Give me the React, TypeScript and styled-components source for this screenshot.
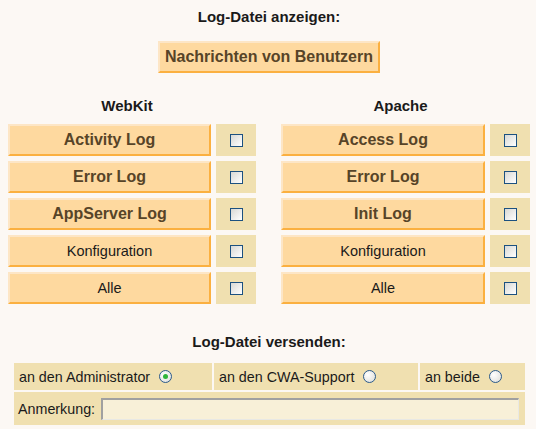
import * as React from "react";
import styled, { createGlobalStyle } from "styled-components";

const GlobalStyle = createGlobalStyle`
  html, body {
    margin: 0;
    padding: 0;
    background: #fcf8f4;
  }
  body {
    font-family: "Liberation Sans", Arial, sans-serif;
    color: #1a1a1a;
  }
`;

const Page = styled.div`
  width: 522px;
  padding: 8px 0 0 8px;
`;

const Heading = styled.div`
  text-align: center;
  font-weight: bold;
  font-size: 15px;
  line-height: 18px;
  color: #1a1a1a;
`;

const Center = styled.div`
  display: flex;
  justify-content: center;
  margin-top: 15px;
`;

const LogButton = styled.button<{ $bold?: boolean }>`
  box-sizing: border-box;
  background: #fed99f;
  border-style: solid;
  border-width: 2px;
  border-color: #fde6c6 #fbb040 #fbb040 #fde6c6;
  color: ${props => (props.$bold ? "#574428" : "#1a1a1a")};
  font-family: "Liberation Sans", Arial, sans-serif;
  font-weight: ${props => (props.$bold ? "bold" : "normal")};
  font-size: ${props => (props.$bold ? "16px" : "14.5px")};
  height: 32px;
  padding: 0 5px;
  margin: 0;
  cursor: pointer;
`;

const Columns = styled.div`
  display: grid;
  grid-template-columns: 248px 249px;
  column-gap: 25px;
  margin-top: 24px;
`;

const Column = styled.div`
  display: flex;
  flex-direction: column;
`;

const ColumnTitle = styled.div`
  text-align: center;
  font-weight: bold;
  font-size: 15px;
  line-height: 18px;
  margin-bottom: 9px;
  padding-right: 10px;
`;

const Rows = styled.div`
  display: flex;
  flex-direction: column;
  gap: 5px;
`;

const Row = styled.div`
  display: grid;
  grid-template-columns: 1fr 40px;
  column-gap: 5px;
  height: 32px;

  & > button {
    width: 100%;
  }
`;

const CheckCell = styled.div`
  background: #f0e0b0;
  display: flex;
  align-items: center;
  justify-content: center;
`;

const Box = styled.span`
  box-sizing: border-box;
  width: 13px;
  height: 13px;
  border: 1px solid #1c5180;
  background: linear-gradient(135deg, #d8d8d4 0%, #ffffff 100%);
`;

const SendSection = styled.div`
  margin-top: 29px;
`;

const SendTable = styled.div`
  display: flex;
  flex-direction: column;
  gap: 2px;
  margin: 12px 0 0 6px;
  width: 511px;
`;

const RadioRow = styled.div`
  display: grid;
  grid-template-columns: 198px 204px 1fr;
  column-gap: 2px;
  height: 27px;
`;

const RadioCell = styled.label`
  background: #f0e0b0;
  display: flex;
  align-items: center;
  padding-left: 5px;
  font-size: 14.3px;
  color: #1a1a1a;
`;

const Radio = styled.span<{ $checked?: boolean }>`
  box-sizing: border-box;
  width: 13px;
  height: 13px;
  margin-left: 9px;
  border-radius: 50%;
  border: 1px solid #2a5a8c;
  background: radial-gradient(circle at 35% 35%, #ffffff 0%, #e6e6e2 70%, #cfcfcb 100%);
  display: flex;
  align-items: center;
  justify-content: center;

  &::after {
    content: "";
    display: ${props => (props.$checked ? "block" : "none")};
    width: 5px;
    height: 5px;
    border-radius: 50%;
    background: #2fb53a;
  }
`;

const NoteRow = styled.div`
  background: #f0e0b0;
  height: 33px;
  display: flex;
  align-items: center;
  padding: 0 6px 0 4px;
  font-size: 14.3px;
`;

const NoteInput = styled.input`
  box-sizing: border-box;
  flex: 1;
  height: 22px;
  margin-left: 6px;
  background: #f8f0d8;
  border-style: solid;
  border-width: 2px 1px 1px 2px;
  border-color: #a0a0a0 #e8e8e4 #e8e8e4 #a0a0a0;
  outline: none;
`;

const webkit = [
  { label: "Activity Log", bold: true },
  { label: "Error Log", bold: true },
  { label: "AppServer Log", bold: true },
  { label: "Konfiguration", bold: false },
  { label: "Alle", bold: false },
];

const apache = [
  { label: "Access Log", bold: true },
  { label: "Error Log", bold: true },
  { label: "Init Log", bold: true },
  { label: "Konfiguration", bold: false },
  { label: "Alle", bold: false },
];

const LogColumn = ({ title, items }: { title: string; items: { label: string; bold: boolean }[] }) => (
  <Column>
    <ColumnTitle>{title}</ColumnTitle>
    <Rows>
      {items.map((item, i) => (
        <Row key={i}>
          <LogButton $bold={item.bold}>{item.label}</LogButton>
          <CheckCell>
            <Box />
          </CheckCell>
        </Row>
      ))}
    </Rows>
  </Column>
);

export default function App() {
  return (
    <>
      <GlobalStyle />
      <Page>
        <Heading>Log-Datei anzeigen:</Heading>
        <Center>
          <LogButton $bold>Nachrichten von Benutzern</LogButton>
        </Center>
        <Columns>
          <LogColumn title="WebKit" items={webkit} />
          <LogColumn title="Apache" items={apache} />
        </Columns>
        <SendSection>
          <Heading>Log-Datei versenden:</Heading>
          <SendTable>
            <RadioRow>
              <RadioCell>
                an den Administrator <Radio $checked />
              </RadioCell>
              <RadioCell>
                an den CWA-Support <Radio />
              </RadioCell>
              <RadioCell>
                an beide <Radio />
              </RadioCell>
            </RadioRow>
            <NoteRow>
              Anmerkung:
              <NoteInput type="text" />
            </NoteRow>
          </SendTable>
        </SendSection>
      </Page>
    </>
  );
}
